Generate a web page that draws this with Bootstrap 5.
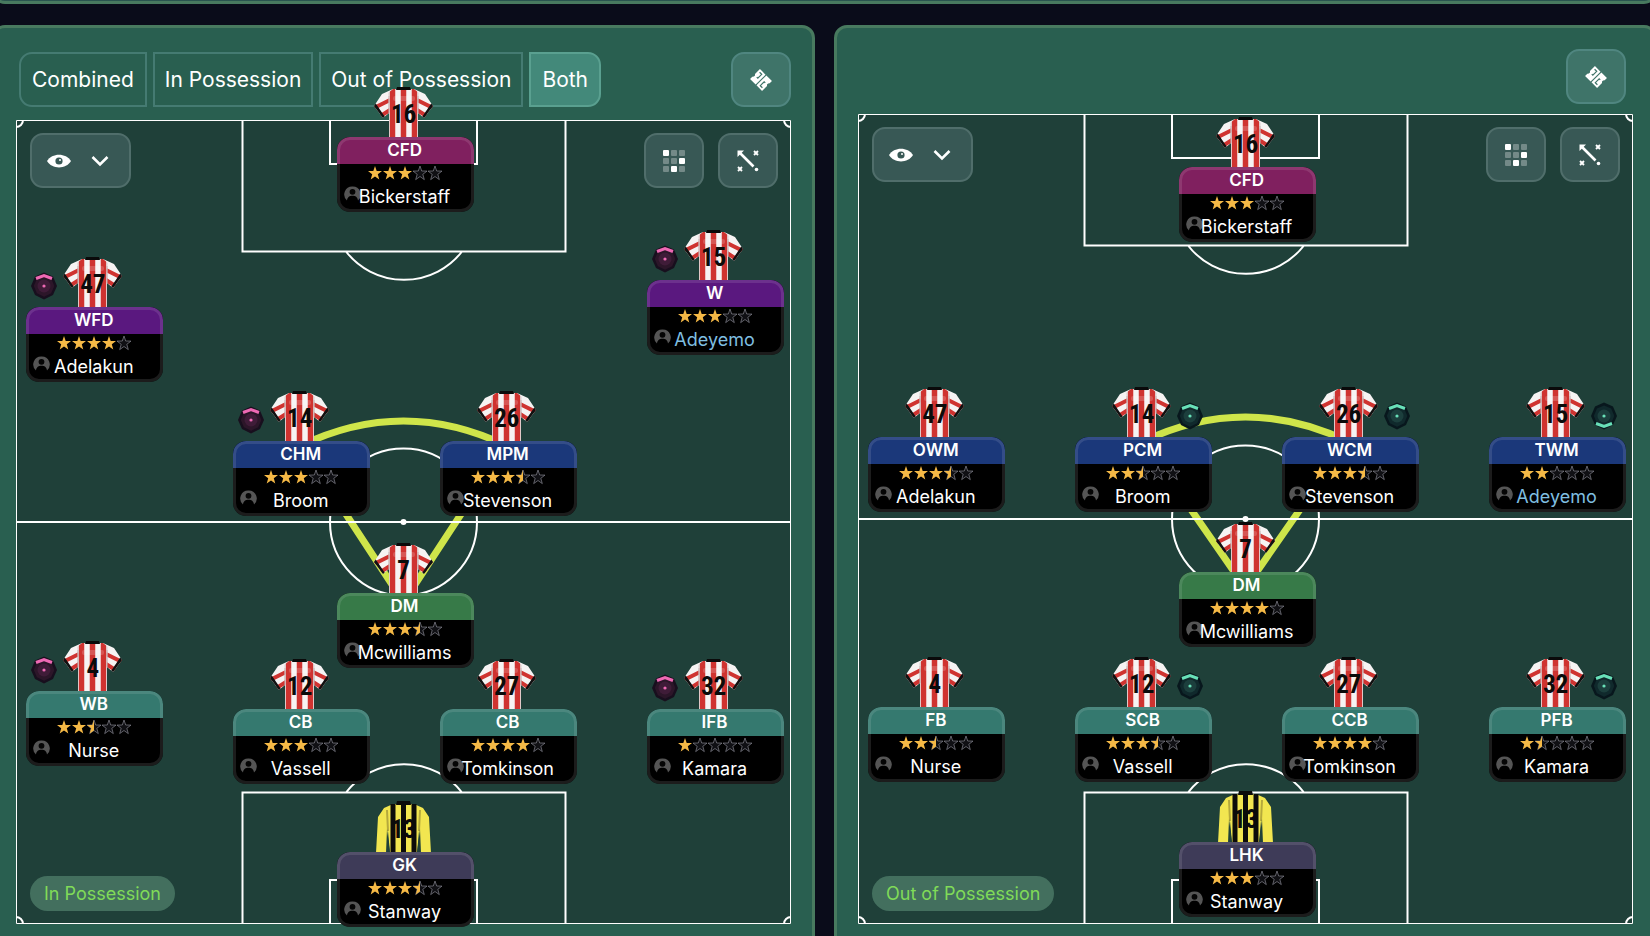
<!DOCTYPE html>
<html lang="en">
<head>
<meta charset="utf-8">
<meta name="viewport" content="width=device-width, initial-scale=1">
<title>Tactics</title>
<link href="https://cdn.jsdelivr.net/npm/bootstrap@5.3.0/dist/css/bootstrap.min.css" rel="stylesheet">
<style>
  body { background: #0a0c1a; color: #fff; font-family: Inter, "Liberation Sans", sans-serif; }
  .board { margin: 0 -7px 0 -8px; }
  .strip-above { height: 40px; margin-top: -36px; margin-bottom: 21px; background: #2a5550; border: 3px solid #487a5f; border-radius: 13px; }
  .panels { gap: 19px; }
  .tactic { flex: 1 1 0; min-width: 0; background: #295f50; border: 3px solid #487a5f; border-radius: 13px; padding: 24px 21px 48px; }
  .tactic-out { padding-top: 21px; }
  .bar-in { margin-bottom: 13px; padding-left: 3px; }
  .bar-out { margin-bottom: 10px; padding-right: 7px; }
  .tabs { gap: 6px; }
  .tab { height: 55px; padding: 0 10px; background: transparent; border: 2px solid #457b72; color: #fff; font-size: 21px; line-height: 24px; white-space: nowrap; }
  .tab:first-child { padding: 0 11px; border-radius: 13px 0 0 13px; }
  .tab:last-child { padding: 0 11px; border-radius: 0 13px 13px 0; }
  .tab-on { background: #43897a; border-color: #5aa090; }
  .tool { width: 60px; height: 55px; padding: 0; border: 2px solid #508680; border-radius: 13px; background: #3f7469; color: #fff; display: flex; align-items: center; justify-content: center; }
  .tool-dark { background: #385855; border-color: #506e6b; }
  .tool-wide { width: 101px; gap: 20px; padding-right: 5px; }
  .pitch { position: relative; background: #1f4039; }
  .pitch-in { aspect-ratio: 775 / 804; }
  .pitch-out { aspect-ratio: 775 / 810; }
  .field { position: absolute; inset: 0; width: 100%; height: 100%; }
  .field path { fill: none; }
  .ground { stroke: #fff; stroke-width: 2; }
  .edge { stroke: #fff; stroke-width: 1; }
  .link { stroke: #cfe54a; stroke-width: 7; }
  .tools { position: relative; padding: 13px 13px 13px 14px; gap: 14px; }
  .phase { position: absolute; left: 14px; bottom: 13px; height: 35px; padding: 0 14px; border-radius: 18px; background: #436f5e; color: #80db58; font-size: 18px; line-height: 35px; white-space: nowrap; }
  .player { position: absolute; width: 137px; margin-left: -68px; }
  .plate { position: relative; height: 75px; border-radius: 13px; overflow: hidden; background: #000; text-align: center; }
  .plate::after { content: ""; position: absolute; inset: 0; border: 3px solid rgba(255,255,255,.11); border-radius: 13px; }
  .duty { height: 27px; padding-right: 2px; font-size: 17px; line-height: 27px; font-weight: 600; }
  .rating { height: 18px; }
  .rating svg { display: block; margin: 0 auto; }
  .who { padding-right: 2px; font-size: 18px; line-height: 30px; position: relative; white-space: nowrap; }
  .face { position: absolute; left: 7px; top: 49px; }
  .kit { position: absolute; left: 36px; top: -51px; }
  .num { position: absolute; left: 36px; top: -34px; width: 61px; text-align: center; color: #0b0b0b; font-family: "Roboto Condensed", Roboto, "Liberation Sans", sans-serif; font-weight: 700; font-size: 25px; line-height: 24px; }
  .medal { position: absolute; top: -35px; }
  .medal-l { left: 4px; }
  .medal-r { left: 101px; }
  .attack { background: #80205f; } .wing { background: #5a187f; } .mid { background: #1b387a; }
  .hold { background: #377a48; } .back { background: #35796f; } .keep { background: #3e3b58; }
  .loaned { color: #7fbfe0; }
</style>
</head>
<body>
<svg width="0" height="0" class="position-absolute" aria-hidden="true">
  <defs>
    <path id="star" d="M7 0 8.700 5 14 5.100 9.800 8.300 11.300 13.600 7 10.500 2.700 13.600 4.200 8.300 0 5.100 5.300 5Z"/>
    <clipPath id="half"><rect width="7" height="14"/></clipPath>
    <clipPath id="torso"><path d="M20 3H41L46 7 45 29V52H16V29L15 7Z"/></clipPath>
    <clipPath id="sleeves"><path d="M17 4 9 8 1 20 10 32 16 27ZM44 4 52 8 60 20 51 32 45 27Z"/></clipPath>
    <g id="shirt">
      <path d="M20 3 9 8 1 20 10 32 16 27V52H45V27L51 32 60 20 52 8 41 3Z" fill="#f6f3f3"/>
      <g clip-path="url(#sleeves)"><path d="M17 14 1 22M17 24 6 31M44 14 60 22M44 24 55 31" stroke="#cf3330" stroke-width="4"/>
      <path d="M0 18 11 34M61 18 50 34" stroke="#111" stroke-width="5"/></g>
      <path d="M16 10V27M45 10V27" stroke="#b9a9a9" stroke-width="1"/>
      <g clip-path="url(#torso)"><path d="M19.500 0V52M30.500 0V52M41.500 0V52" stroke="#cf3330" stroke-width="5.500"/><path d="M16 0V52M45 0V52" stroke="#d8cccc" stroke-width="1"/></g>
      <rect x="20" y="10" width="22" height="5" rx="2" fill="#fff" opacity=".18"/>
      <path d="M24 1H37L38 4H23Z" fill="#0a0a0a"/>
    </g>
    <g id="keeper">
      <path d="M20 3 11 7 5 16 3 52H14L15 30 17 52H44L46 30 47 52H58L56 16 50 7 41 3Z" fill="#f2e650"/>
      <path d="M14 9 15 30M47 9 46 30" stroke="#b5a93c" stroke-width="2"/>
      <path d="M14 28 13 52H17ZM47 28 48 52H44Z" fill="#1f4039"/>
      <path d="M20 3V52M30.500 3V52M41 3V52" stroke="#0c0c0a" stroke-width="5"/>
      <path d="M24 0H37L38 4H23Z" fill="#0a0a0a"/>
    </g>
    <g id="ticket" fill="currentColor">
      <g transform="rotate(45 12 12)">
        <path d="M3.500 5H11.400V19H3.500V15.800L4.500 14.500V13L3.500 12ZM12.600 5H20.500V8.200L19.500 9.500V11L20.500 12V19H12.600Z"/>
        <path d="M5.500 7.500H8.500V13H7M18.500 16.500H15.500V11H17" fill="none" stroke="#3f7469" stroke-width="1.200"/>
      </g>
    </g>
    <g id="eye"><path d="M0 12C5 3.500 19 3.500 24 12 19 20.500 5 20.500 0 12Z" fill="currentColor"/><circle cx="12" cy="12" r="3.600" fill="#385855"/><circle cx="13" cy="11" r="1" fill="#fff"/></g>
    <path id="chevron" d="M1.500 2 9 9.500 16.500 2" fill="none" stroke="currentColor" stroke-width="2.600"/>
    <g id="dots" fill="#fff">
      <rect width="6" height="6" rx="1"/><rect x="16" y="8" width="6" height="6" rx="1"/><rect x="8" y="16" width="6" height="6" rx="1"/>
      <g opacity=".3"><rect x="8" width="6" height="6" rx="1"/><rect x="16" width="6" height="6" rx="1"/><rect y="8" width="6" height="6" rx="1"/><rect x="8" y="8" width="6" height="6" rx="1"/><rect y="16" width="6" height="6" rx="1"/><rect x="16" y="16" width="6" height="6" rx="1"/></g>
    </g>
    <g id="arrow" fill="none" stroke="#fff" stroke-width="2.600">
      <path d="M2 2 16.500 16.500"/><path d="M.5 .5H7L.5 7Z" fill="#fff" stroke="none"/><path d="M17 1 21 5M21 1 17 5M1 17 5 21M5 17 1 21" stroke-width="1.900"/><circle cx="19.500" cy="19.500" r="1.800" fill="#fff" stroke="none"/>
    </g>
  </defs>
</svg>

<main class="vh-100 overflow-hidden">
  <div class="board">
    <div class="strip-above"></div>
    <div class="panels d-flex align-items-start">
      <section class="tactic" aria-label="In possession">
        <div class="bar-in d-flex justify-content-between">
          <div class="tabs d-flex" role="group" aria-label="View">
            <button type="button" class="tab">Combined</button>
            <button type="button" class="tab">In Possession</button>
            <button type="button" class="tab">Out of Possession</button>
            <button type="button" class="tab tab-on" aria-pressed="true">Both</button>
          </div>
          <button type="button" class="tool" aria-label="Tickets"><svg width="24" height="24"><use href="#ticket"/></svg></button>
        </div>
        <div class="pitch pitch-in" data-side="in" data-height="804"></div>
      </section>
      <section class="tactic tactic-out" aria-label="Out of possession">
        <div class="bar-out d-flex justify-content-end">
          <button type="button" class="tool" aria-label="Tickets"><svg width="24" height="24"><use href="#ticket"/></svg></button>
        </div>
        <div class="pitch pitch-out" data-side="out" data-height="810"></div>
      </section>
    </div>
  </div>
</main>

<script src="https://cdn.jsdelivr.net/npm/bootstrap@5.3.0/dist/js/bootstrap.bundle.min.js"></script>
<script>
  // Columns across the pitch, in percent of its width
  const col = { l: 10.1, lc: 36.8, c: 50.2, rc: 63.5, r: 90.2 };
  // [column, y on the pitch, line, duty, stars, number, name, medal side, medal direction]
  const sides = {
    in: {
      label: 'In Possession',
      links: 'M284 326Q387.5 276 491 326M284 324 387.5 482 491 324',
      players: [
        ['c', 17, 'attack', 'CFD', 3, 16, 'Bickerstaff'],
        ['r', 160, 'wing', 'W', 3, 15, 'Adeyemo', 'l', 'up'],
        ['l', 187, 'wing', 'WFD', 4, 47, 'Adelakun', 'l', 'up'],
        ['lc', 321, 'mid', 'CHM', 3, 14, 'Broom', 'l', 'up'],
        ['rc', 321, 'mid', 'MPM', 3.5, 26, 'Stevenson'],
        ['c', 473, 'hold', 'DM', 3.5, 7, 'Mcwilliams'],
        ['l', 571, 'back', 'WB', 2.5, 4, 'Nurse', 'l', 'up'],
        ['lc', 589, 'back', 'CB', 3, 12, 'Vassell'],
        ['rc', 589, 'back', 'CB', 4, 27, 'Tomkinson'],
        ['r', 589, 'back', 'IFB', 1, 32, 'Kamara', 'l', 'up'],
        ['c', 732, 'keep', 'GK', 3.5, 13, 'Stanway']
      ]
    },
    out: {
      label: 'Out of Possession',
      links: 'M284 328Q387.5 278 491 328M284 325 387.5 474 491 325',
      players: [
        ['c', 53, 'attack', 'CFD', 3, 16, 'Bickerstaff'],
        ['l', 323, 'mid', 'OWM', 3.5, 47, 'Adelakun'],
        ['lc', 323, 'mid', 'PCM', 2.5, 14, 'Broom', 'r', 'up'],
        ['rc', 323, 'mid', 'WCM', 3.5, 26, 'Stevenson', 'r', 'up'],
        ['r', 323, 'mid', 'TWM', 2, 15, 'Adeyemo', 'r', 'down'],
        ['c', 458, 'hold', 'DM', 4, 7, 'Mcwilliams'],
        ['l', 593, 'back', 'FB', 2.5, 4, 'Nurse'],
        ['lc', 593, 'back', 'SCB', 3.5, 12, 'Vassell', 'r', 'up'],
        ['rc', 593, 'back', 'CCB', 4, 27, 'Tomkinson'],
        ['r', 593, 'back', 'PFB', 1.5, 32, 'Kamara', 'r', 'up'],
        ['c', 728, 'keep', 'LHK', 3, 13, 'Stanway']
      ]
    }
  };

  function stars(n) {
    let s = '';
    for (let i = 0; i < 5; i++) {
      s += `<g transform="translate(${i * 15} 0)">`;
      if (n < i + 1) s += '<use href="#star" fill="#101014" stroke="#85858f" stroke-width=".7"/>';
      if (n >= i + 1) s += '<use href="#star" fill="#f5b946"/>';
      else if (n > i) s += '<g clip-path="url(#half)"><use href="#star" fill="#f5b946"/></g>';
      s += '</g>';
    }
    return `<svg width="75" height="18" viewBox="0 -2 75 18" role="img" aria-label="${n} of 5 stars">${s}</svg>`;
  }

  function medal(side, dir) {
    const c = side === 'l' ? ['#180f1e', '#2c1629', '#3f1c38', '#ee69b4'] : ['#08171d', '#10292c', '#1c3f3d', '#68e0b8'];
    const oct = 'M14 .5 23 4.500 27 14 23 23 14 27.500 5 23 1 14 5 4.500Z';
    return `<svg class="medal medal-${side}" width="28" height="28" aria-hidden="true">
      <path d="${oct}" fill="${c[0]}"/><path d="${oct}" fill="${c[1]}" transform="translate(3 3) scale(.79)"/>
      <circle cx="14" cy="14" r="6.500" fill="${c[2]}"/><circle cx="14" cy="14" r="1.600" fill="${c[3]}"/>
      <path d="M6 6.500 14 3.500 22 6.500" fill="none" stroke="${c[3]}" stroke-width="3" ${dir === 'down' ? 'transform="rotate(180 14 14)"' : ''}/></svg>`;
  }

  function field(h, links) {
    const b = h - 131.5, s = h - 44, m = h / 2;
    return `<svg class="field" viewBox="0 0 775 ${h}" preserveAspectRatio="none" aria-hidden="true">
      <path class="link" d="${links}"/>
      <path class="ground" d="M226.500 0V131.500H549.500V0M314 0V44H461V0M330 131.500A73.500 73.500 0 0 0 446 131.500
        M226.500 ${h}V${b}H549.500V${h}M314 ${h}V${s}H461V${h}M330 ${b}A73.500 73.500 0 0 1 446 ${b}
        M0 ${m}H775M314 ${m}A73.500 73.500 0 0 1 461 ${m}A73.500 73.500 0 0 1 314 ${m}
        M7 0A7 7 0 0 1 0 7M768 0A7 7 0 0 0 775 7M7 ${h}A7 7 0 0 0 0 ${h - 7}M768 ${h}A7 7 0 0 1 775 ${h - 7}"/>
      <path class="edge" d="M.5 .5H774.500V${h - .5}H.5Z"/><circle cx="387.500" cy="${m}" r="3" fill="#fff"/></svg>`;
  }

  function player([c, y, line, duty, rate, num, name, ms, md], h) {
    return `<div class="player" style="left:${col[c]}%;top:${y / h * 100}%">
      ${ms ? medal(ms, md) : ''}
      <svg class="kit" width="61" height="52" aria-hidden="true"><use href="#${line === 'keep' ? 'keeper' : 'shirt'}"/></svg>
      <span class="num">${num}</span>
      <div class="plate">
        <div class="duty ${line}">${duty}</div>
        <div class="rating">${stars(rate)}</div>
        <svg class="face" width="17" height="17" viewBox="0 0 17 17" aria-hidden="true"><path d="M8.500 .5A8 8 0 0 0 3 14.500C3.500 11 5.500 9.800 8.500 9.800S13.500 11 14 14.500A8 8 0 0 0 8.500 .5Z" fill="#555"/><circle cx="8.500" cy="5.800" r="2.900" fill="#050505"/></svg>
        <div class="who ${name === 'Adeyemo' ? 'loaned' : ''}">${name}</div>
      </div></div>`;
  }

  document.querySelectorAll('.pitch').forEach(p => {
    const side = sides[p.dataset.side], h = +p.dataset.height;
    p.innerHTML = field(h, side.links) +
      `<div class="tools d-flex">
        <button type="button" class="tool tool-dark tool-wide me-auto" aria-label="Show on pitch"><svg width="24" height="24"><use href="#eye"/></svg><svg width="18" height="12"><use href="#chevron"/></svg></button>
        <button type="button" class="tool tool-dark" aria-label="Positions"><svg width="22" height="22"><use href="#dots"/></svg></button>
        <button type="button" class="tool tool-dark" aria-label="Movement"><svg width="22" height="22"><use href="#arrow"/></svg></button>
      </div>
      <div class="phase">${side.label}</div>` +
      side.players.map(r => player(r, h)).join('');
  });
</script>
</body>
</html>
